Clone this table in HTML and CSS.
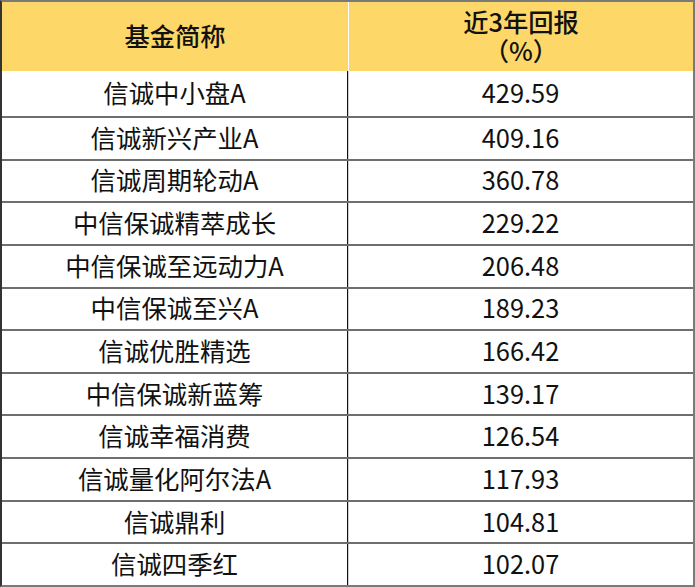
FILE: index.html
```html
<!DOCTYPE html>
<html lang="zh-CN">
<head>
<meta charset="utf-8">
<link rel="stylesheet" href="styles.css">
</head>
<body>
<div class="table">
  <div class="head">
    <div class="hcell">基金简称</div>
    <div class="hcell">近3年回报<br>（%）</div>
  </div>
  <div class="row first"><div class="cell">信诚中小盘A</div><div class="cell">429.59</div></div>
  <div class="row"><div class="cell">信诚新兴产业A</div><div class="cell">409.16</div></div>
  <div class="row"><div class="cell">信诚周期轮动A</div><div class="cell">360.78</div></div>
  <div class="row"><div class="cell">中信保诚精萃成长</div><div class="cell">229.22</div></div>
  <div class="row"><div class="cell">中信保诚至远动力A</div><div class="cell">206.48</div></div>
  <div class="row"><div class="cell">中信保诚至兴A</div><div class="cell">189.23</div></div>
  <div class="row"><div class="cell">信诚优胜精选</div><div class="cell">166.42</div></div>
  <div class="row"><div class="cell">中信保诚新蓝筹</div><div class="cell">139.17</div></div>
  <div class="row"><div class="cell">信诚幸福消费</div><div class="cell">126.54</div></div>
  <div class="row"><div class="cell">信诚量化阿尔法A</div><div class="cell">117.93</div></div>
  <div class="row"><div class="cell">信诚鼎利</div><div class="cell">104.81</div></div>
  <div class="row"><div class="cell">信诚四季红</div><div class="cell">102.07</div></div>
</div>
</body>
</html>
```
FILE: styles.css
```css
html, body {
  margin: 0;
  padding: 0;
  background: #ffffff;
}
.table {
  width: 695px;
  height: 587px;
  box-sizing: border-box;
  border: 2px solid #7a7a7a;
  border-left-color: #333333;
  font-family: "Noto Sans CJK SC", "Noto Sans", sans-serif;
  color: #111111;
  display: flex;
  flex-direction: column;
}
.head {
  height: 69px;
  display: grid;
  grid-template-columns: 346px 1fr;
  background: #fdd868;
}
.hcell {
  display: flex;
  align-items: center;
  justify-content: center;
  text-align: center;
  font-size: 25.3px;
  font-weight: 500;
  line-height: 29px;
  padding-bottom: 2px;
}
.hcell + .hcell {
  border-left: 1px solid #ffffff;
}
.row {
  flex: 1;
  display: grid;
  grid-template-columns: 345px 1fr;
  border-top: 2px solid #6e6e6e;
}
.row.first {
  flex: 0 0 45px;
  border-top: none;
}
.cell {
  display: flex;
  align-items: center;
  justify-content: center;
  font-size: 25.4px;
  font-weight: 400;
  line-height: 30px;
  padding-bottom: 3px;
}
.cell + .cell {
  border-left: 1px solid #111111;
  box-shadow: inset 1px 0 0 #d0d0d0;
}
```
